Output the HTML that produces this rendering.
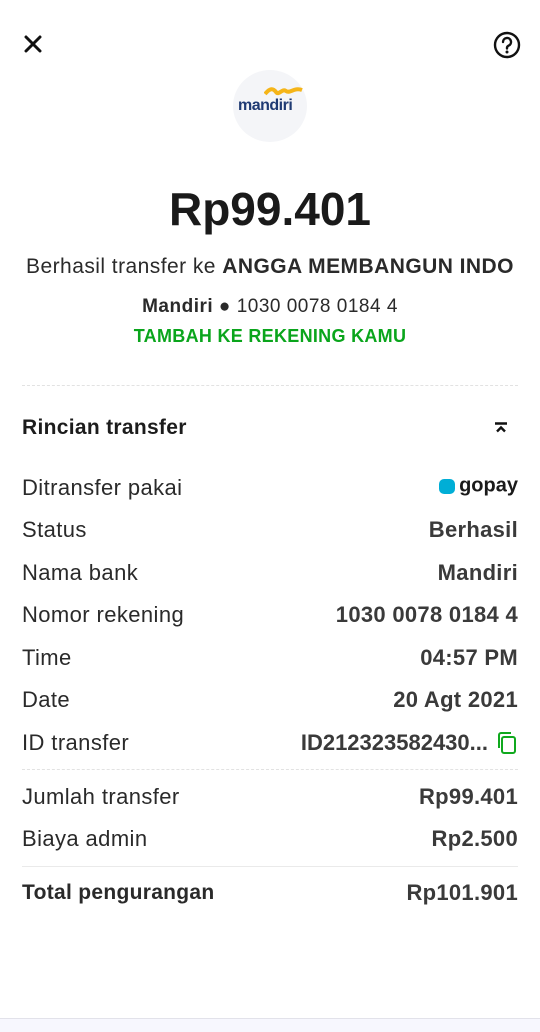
<!DOCTYPE html>
<html><head><meta charset="utf-8"><style>
body{margin:0;width:540px;height:1031px;background:#fff;position:relative;overflow:hidden;font-family:"Liberation Sans",sans-serif;color:#1c1c1c}
.a{position:absolute;white-space:nowrap}
.l{left:22px;font-size:22px;letter-spacing:0.4px;color:#2a2a2a;transform:translateY(-50%)}
.r{right:22px;font-size:22px;letter-spacing:0.3px;font-weight:bold;color:#3a3a3a;transform:translateY(-50%);text-align:right}
.ln{position:absolute;left:22px;right:22px;border-top:1px dashed #e2e2e2}
</style></head><body>
<svg class="a" style="left:24px;top:35px" width="18" height="18" viewBox="0 0 18 18"><path d="M2 2L16 16M16 2L2 16" stroke="#111" stroke-width="3" stroke-linecap="round"/></svg>
<svg class="a" style="left:493px;top:31px" width="28" height="28" viewBox="0 0 28 28"><circle cx="14" cy="14" r="12" fill="none" stroke="#111" stroke-width="2.4"/><path d="M10 11a4 4 0 1 1 5.5 3.7c-1 .5-1.5 1.2-1.5 2.3v.5" fill="none" stroke="#111" stroke-width="2.4" stroke-linecap="round"/><circle cx="14" cy="21" r="1.5" fill="#111"/></svg>
<div class="a" style="left:233px;top:70px;width:74px;height:72px;border-radius:50%;background:#f4f5f8"></div>
<svg class="a" style="left:264px;top:86px" width="40" height="10" viewBox="0 0 40 10"><path d="M1 8C6 2 9 2 12 6S18 2 22 5S30 1 38 4" fill="none" stroke="#f5b519" stroke-width="4"/></svg>
<div class="a" style="left:238px;top:97px;font-size:16px;font-weight:bold;color:#1f3a73;letter-spacing:-0.5px">mandiri</div>
<div class="a" style="left:0;width:540px;text-align:center;top:182px;font-size:46px;font-weight:bold;color:#1a1a1a">Rp99.401</div>
<div class="a" style="left:0;width:540px;text-align:center;top:255px;font-size:21px;letter-spacing:0.45px;color:#2a2a2a">Berhasil transfer ke <b>ANGGA MEMBANGUN INDO</b></div>
<div class="a" style="left:0;width:540px;text-align:center;top:296px;font-size:19px;letter-spacing:0.5px;color:#2a2a2a"><b>Mandiri</b> ● 1030 0078 0184 4</div>
<div class="a" style="left:0;width:540px;text-align:center;top:326px;font-size:18px;letter-spacing:0.3px;font-weight:bold;color:#0aa51c">TAMBAH KE REKENING KAMU</div>
<div class="ln" style="top:385px"></div>
<div class="a" style="left:22px;top:416px;font-size:21px;letter-spacing:0.3px;font-weight:bold;color:#1c1c1c">Rincian transfer</div>
<svg class="a" style="left:494px;top:422px" width="14" height="12" viewBox="0 0 14 12"><path d="M1 1.5H13M3 9.5L7 5.5L11 9.5" fill="none" stroke="#111" stroke-width="2.4"/></svg>
<div class="a l" style="top:488px">Ditransfer pakai</div>
<div class="a" style="left:439px;top:479px;width:16px;height:15px;background:#00aed6;border-radius:5px"></div>
<div class="a r" style="top:486px;font-size:20px;letter-spacing:0;color:#1a1a1a">gopay</div>
<div class="a l" style="top:530px">Status</div><div class="a r" style="top:530px">Berhasil</div>
<div class="a l" style="top:573px">Nama bank</div><div class="a r" style="top:573px">Mandiri</div>
<div class="a l" style="top:615px">Nomor rekening</div><div class="a r" style="top:615px">1030 0078 0184 4</div>
<div class="a l" style="top:658px">Time</div><div class="a r" style="top:658px">04:57 PM</div>
<div class="a l" style="top:700px">Date</div><div class="a r" style="top:700px">20 Agt 2021</div>
<div class="a l" style="top:743px">ID transfer</div><div class="a r" style="top:743px;right:52px;letter-spacing:0">ID212323582430...</div>
<svg class="a" style="left:496px;top:731px" width="22" height="24" viewBox="0 0 22 24"><rect x="6" y="6" width="13" height="16" rx="2" fill="none" stroke="#10a91e" stroke-width="2"/><path d="M3 17V4a2 2 0 0 1 2-2h10" fill="none" stroke="#10a91e" stroke-width="2"/></svg>
<div class="ln" style="top:769px"></div>
<div class="a l" style="top:797px">Jumlah transfer</div><div class="a r" style="top:797px">Rp99.401</div>
<div class="a l" style="top:839px">Biaya admin</div><div class="a r" style="top:839px">Rp2.500</div>
<div class="ln" style="top:866px;border-top:1px solid #eaeaea"></div>
<div class="a l" style="top:893px;font-weight:bold;font-size:21px;letter-spacing:0.3px">Total pengurangan</div><div class="a r" style="top:893px">Rp101.901</div>
<div class="a" style="left:0;top:1018px;width:540px;height:13px;background:#f7f7fe;border-top:1px solid #e2e2ea"></div>
</body></html>
